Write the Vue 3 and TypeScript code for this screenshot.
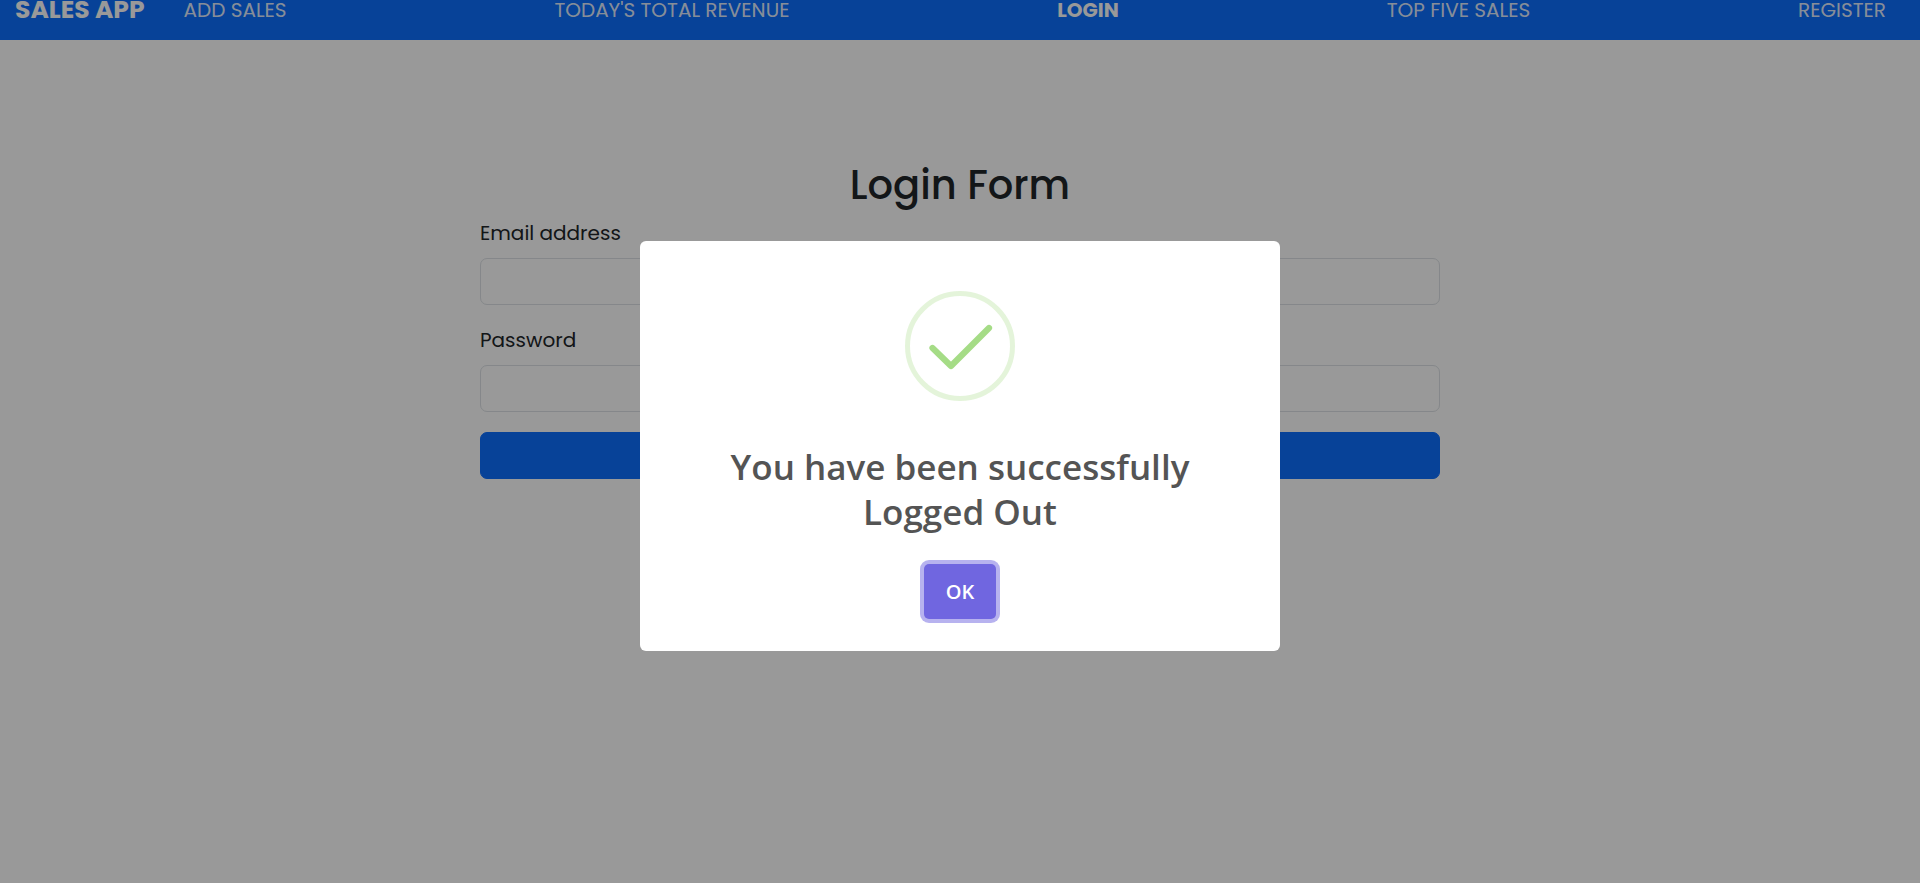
<script setup lang="ts">
import { ref } from 'vue'

interface NavItem {
  label: string
  href: string
  active?: boolean
}

const navItems: NavItem[] = [
  { label: 'ADD SALES', href: '#add-sales' },
  { label: "TODAY'S TOTAL REVENUE", href: '#revenue' },
  { label: 'LOGIN', href: '#login', active: true },
  { label: 'TOP FIVE SALES', href: '#top-five' },
  { label: 'REGISTER', href: '#register' },
]

const email = ref('')
const password = ref('')
const alertOpen = ref(true)
</script>

<template>
  <div class="page">
    <nav class="navbar">
      <a class="brand" href="#home">SALES APP</a>
      <ul class="nav-list">
        <li v-for="item in navItems" :key="item.label">
          <a class="nav-link" :class="{ active: item.active }" :href="item.href">{{ item.label }}</a>
        </li>
      </ul>
    </nav>

    <main class="content">
      <h1 class="heading">Login Form</h1>
      <form class="form" @submit.prevent>
        <div class="field">
          <label for="email">Email address</label>
          <input id="email" v-model="email" type="email" />
        </div>
        <div class="field">
          <label for="password">Password</label>
          <input id="password" v-model="password" type="password" />
        </div>
        <button class="submit" type="submit" aria-label="Login"></button>
      </form>
    </main>

    <div v-if="alertOpen" class="overlay">
      <div class="dialog" role="dialog" aria-modal="true" aria-labelledby="alert-title">
        <svg class="icon" viewBox="0 0 110 110" aria-hidden="true">
          <circle cx="55" cy="55" r="52.5" fill="none" stroke="#a5dc86" stroke-opacity="0.3" stroke-width="5" />
          <path
            d="M27.5 57 L46 75 L84 37"
            fill="none"
            stroke="#a5dc86"
            stroke-width="6.2"
            stroke-linecap="round"
            stroke-linejoin="round"
          />
        </svg>
        <h2 id="alert-title" class="title">You have been successfully Logged Out</h2>
        <button class="confirm" type="button" @click="alertOpen = false">OK</button>
      </div>
    </div>
  </div>
</template>

<style>
body {
  margin: 0;
  background: #fff;
}
</style>

<style scoped>
.page {
  min-height: 100vh;
  font-family: Poppins, Inter, sans-serif;
  font-size: 20px;
  line-height: 30px;
  color: #212529;
}

.navbar {
  display: flex;
  align-items: flex-start;
  gap: 39px;
  padding: 0 34px 20px 15px;
  background: #0d6efd;
  line-height: 20px;
}

.brand {
  color: #fff;
  font-size: 25px;
  font-weight: 700;
  text-decoration: none;
  white-space: nowrap;
}

.nav-list {
  display: flex;
  flex: 1;
  justify-content: space-between;
  margin: 0;
  padding: 0;
  list-style: none;
}

.nav-link {
  display: block;
  color: rgba(255, 255, 255, 0.9);
  text-decoration: none;
  white-space: nowrap;
}

.nav-link.active {
  color: #fff;
  font-weight: 700;
}

.content {
  width: 50%;
  margin: 0 auto;
  padding-top: 120px;
}

.heading {
  margin: 0 0 8px;
  font-size: 40px;
  font-weight: 500;
  line-height: 50px;
  text-align: center;
}

.form {
  display: flex;
  flex-direction: column;
  gap: 20px;
}

.field {
  display: flex;
  flex-direction: column;
  gap: 10px;
}

.field input {
  box-sizing: border-box;
  width: 100%;
  height: 47px;
  padding: 8px 15px;
  border: 1px solid #dee2e6;
  border-radius: 7px;
  background: #fff;
  color: inherit;
  font: inherit;
}

.submit {
  height: 47px;
  padding: 0 15px;
  border: 1px solid #0d6efd;
  border-radius: 7px;
  background: #0d6efd;
  color: #fff;
  font: inherit;
}

.overlay {
  position: fixed;
  inset: 0;
  box-sizing: border-box;
  display: flex;
  align-items: center;
  justify-content: center;
  padding: 9px 12px 0;
  background: rgba(0, 0, 0, 0.4);
  font-family: "Segoe UI", "Open Sans", "Noto Sans", sans-serif;
}

.dialog {
  box-sizing: border-box;
  display: flex;
  flex-direction: column;
  align-items: center;
  width: 640px;
  max-width: 100%;
  padding: 50px 20px 32px;
  border-radius: 6px;
  background: #fff;
}

.icon {
  display: block;
  width: 110px;
  height: 110px;
}

.title {
  max-width: 520px;
  margin: 43px 0 30px;
  color: #545454;
  font-size: 35px;
  font-weight: 600;
  line-height: 45px;
  text-align: center;
}

.confirm {
  min-width: 72px;
  height: 55px;
  padding: 0 20px;
  border: 0;
  border-radius: 5px;
  background: #7066e0;
  box-shadow: 0 0 0 4px rgba(112, 102, 224, 0.5);
  color: #fff;
  font-family: inherit;
  font-size: 20px;
  font-weight: 600;
}
</style>
